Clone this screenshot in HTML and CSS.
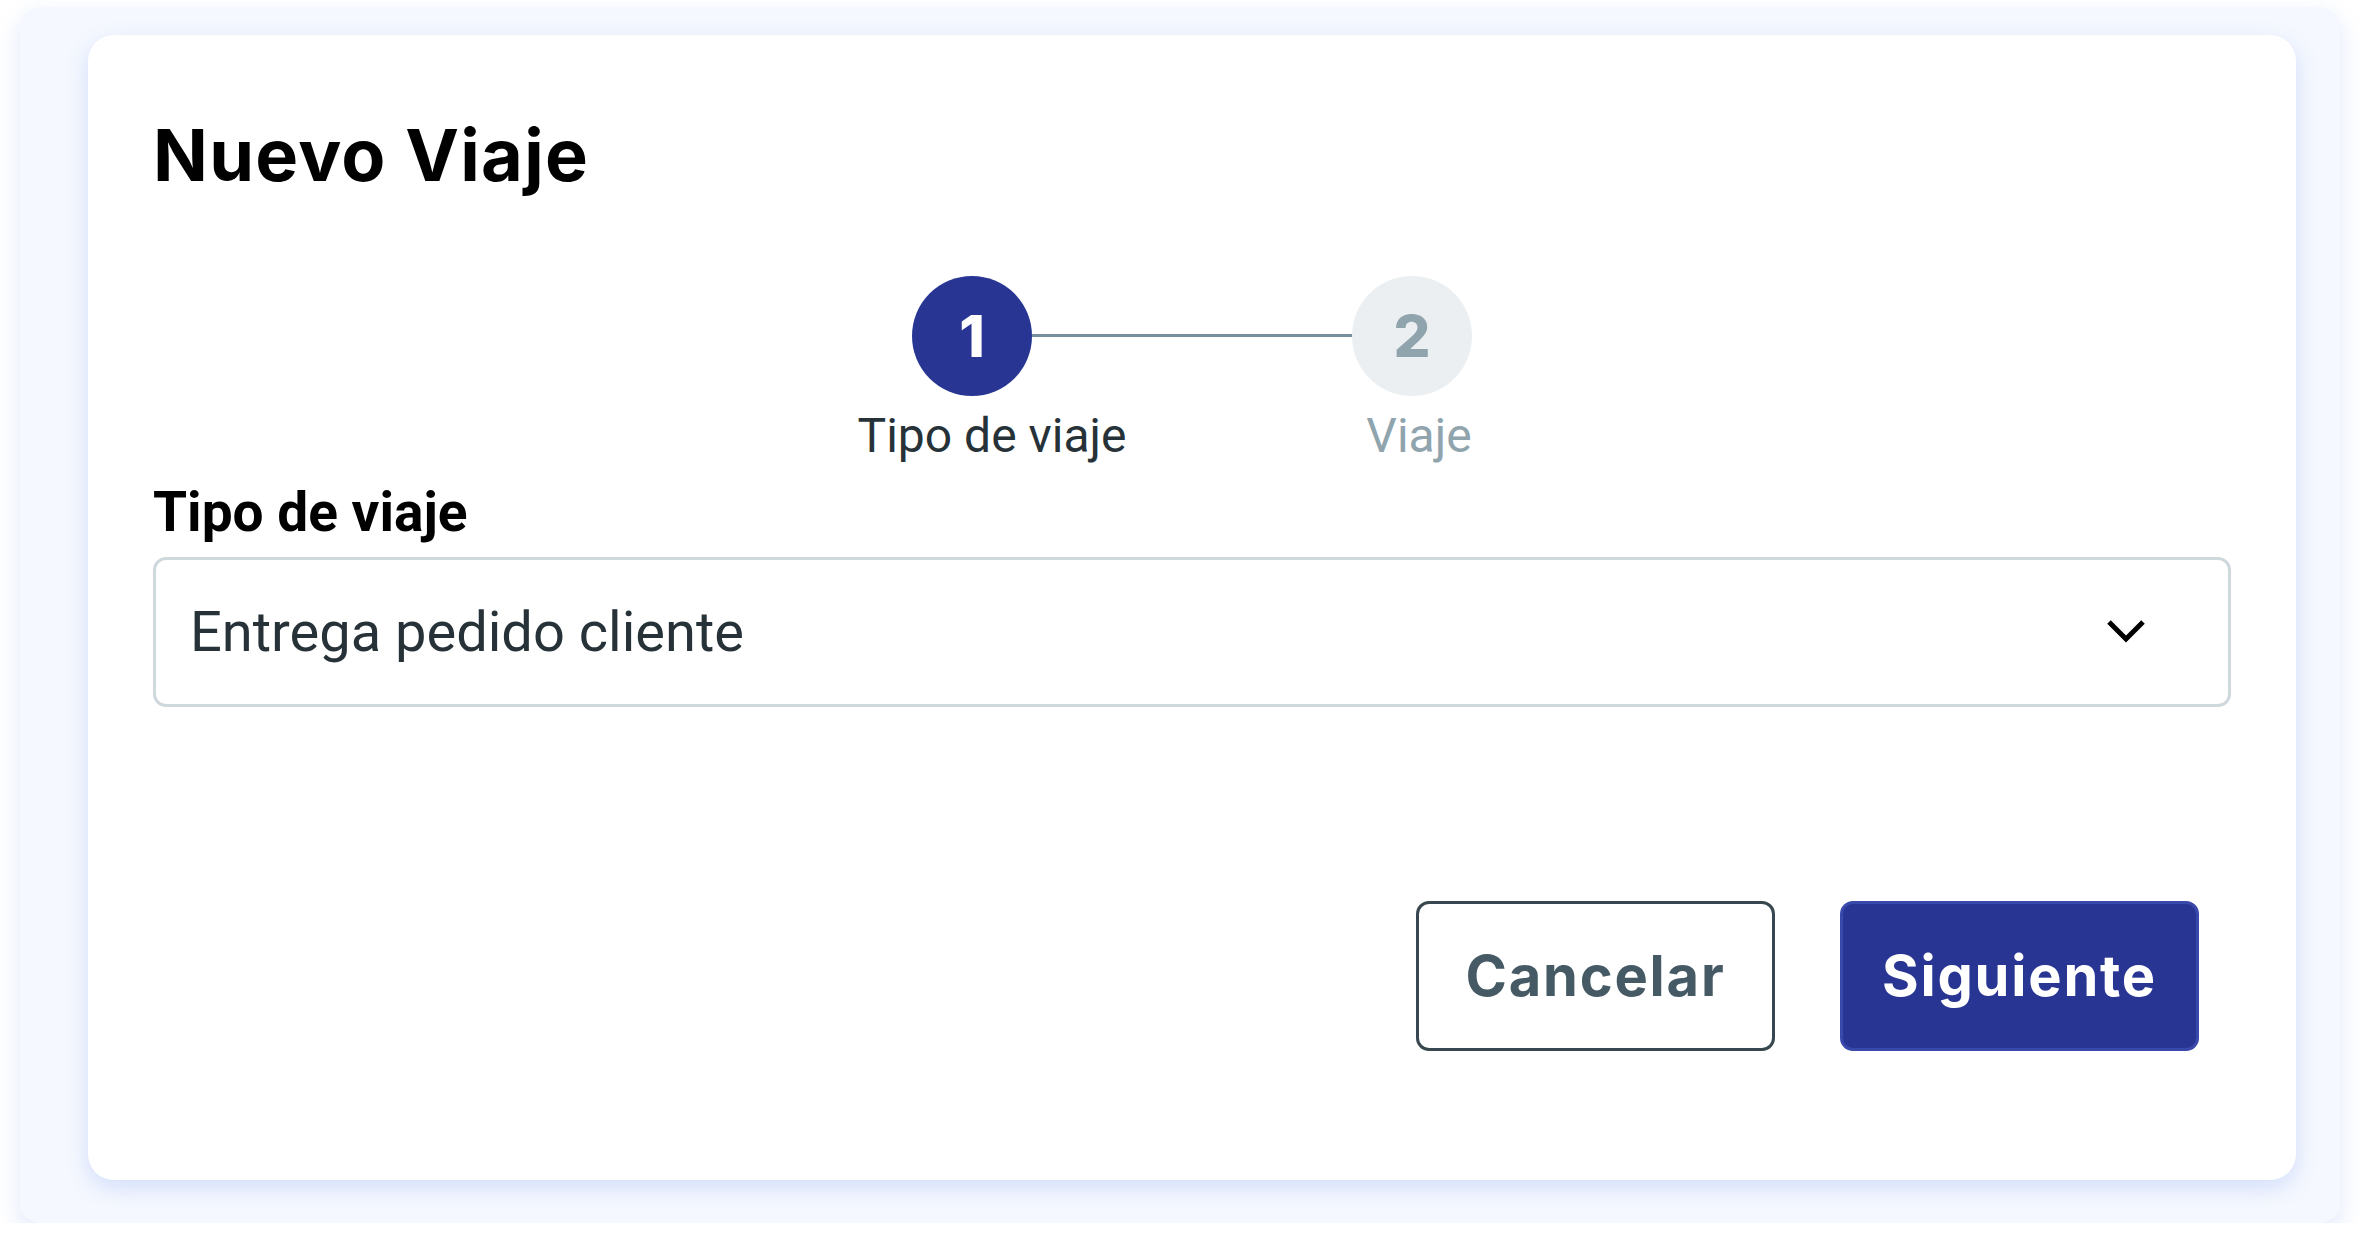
FILE: index.html
```html
<!DOCTYPE html>
<html lang="es">
<head>
  <meta charset="UTF-8" />
  <meta name="viewport" content="width=device-width, initial-scale=1.0" />
  <title>Nuevo Viaje</title>
  <link rel="stylesheet" href="styles.css">
</head>
<body>
  <div class="shell">
    <div class="card">
      <h1 class="title">Nuevo Viaje</h1>

      <div class="stepper">
        <div class="step active">
          <span class="dot">1</span>
          <span class="step-name first">Tipo de viaje</span>
        </div>
        <div class="connector"></div>
        <div class="step">
          <span class="dot">2</span>
          <span class="step-name last">Viaje</span>
        </div>
      </div>

      <label class="field-label">Tipo de viaje</label>
      <div class="select">
        <span>Entrega pedido cliente</span>
        <svg class="chevron" width="40" height="26" viewBox="0 0 40 26">
          <path d="M3 3 L20 20 L37 3" fill="none" stroke="#000" stroke-width="5" />
        </svg>
      </div>

      <div class="actions">
        <button class="btn btn-outline">Cancelar</button>
        <button class="btn btn-primary">Siguiente</button>
      </div>
    </div>
  </div>
</body>
</html>
```

FILE: styles.css
```css
body {
  margin: 0;
  background: #fff;
  font-family: Roboto, "Noto Sans", sans-serif;
}
.shell {
  margin: 7px 20px 0;
  padding: 28px 44px 43px 68px;
  background: #f5f8fe;
  border-radius: 20px;
  box-shadow: 0 10px 24px rgba(90, 130, 235, 0.18);
}
.card {
  background: #fff;
  border-radius: 26px;
  padding: 76px 65px 129px;
  box-shadow: 0 8px 22px rgba(90, 130, 235, 0.22);
}
.title {
  margin: 0;
  font-family: Inter, sans-serif;
  font-weight: 700;
  font-size: 72px;
  line-height: 88px;
  letter-spacing: 1.3px;
  color: #000;
}

/* stepper */
.stepper {
  margin-top: 77px;
  display: flex;
  justify-content: center;
  align-items: flex-start;
}
.step {
  width: 120px;
  display: flex;
  flex-direction: column;
  align-items: center;
}
.dot {
  width: 120px;
  height: 120px;
  border-radius: 50%;
  display: flex;
  align-items: center;
  justify-content: center;
  font-family: Inter, sans-serif;
  font-weight: 800;
  font-size: 58px;
  background: #eceff1;
  color: #90a4ae;
}
.step.active .dot {
  background: #283593;
  color: #fff;
}
.connector {
  width: 320px;
  height: 3px;
  margin-top: 58px;
  background: #78909c;
}
.step-name {
  margin-top: 12px;
  font-size: 48px;
  line-height: 56px;
  white-space: nowrap;
  color: #90a4ae;
}
.step.active .step-name {
  color: #263238;
}
.step-name.first {
  padding-left: 40px;
}
.step-name.last {
  padding-left: 14px;
}

/* field */
.field-label {
  display: block;
  margin-top: 16px;
  font-weight: 700;
  font-size: 55px;
  line-height: 64px;
  color: #000;
}
.select {
  margin-top: 13px;
  height: 150px;
  box-sizing: border-box;
  border: 3px solid #cfd8dc;
  border-radius: 13px;
  display: flex;
  align-items: center;
  justify-content: space-between;
  padding: 0 82px 0 34px;
  font-size: 56px;
  color: #263238;
}

/* buttons */
.actions {
  margin-top: 194px;
  padding-right: 32px;
  display: flex;
  justify-content: flex-end;
  gap: 65px;
}
.btn {
  width: 359px;
  height: 150px;
  box-sizing: border-box;
  border-radius: 13px;
  font-family: Inter, sans-serif;
  font-weight: 700;
  font-size: 56px;
  letter-spacing: 1.8px;
  cursor: pointer;
}
.btn-outline {
  background: #fff;
  border: 3px solid #37474f;
  color: #455a64;
}
.btn-primary {
  background: #283593;
  border: 3px solid #3949ab;
  color: #fff;
}
```
